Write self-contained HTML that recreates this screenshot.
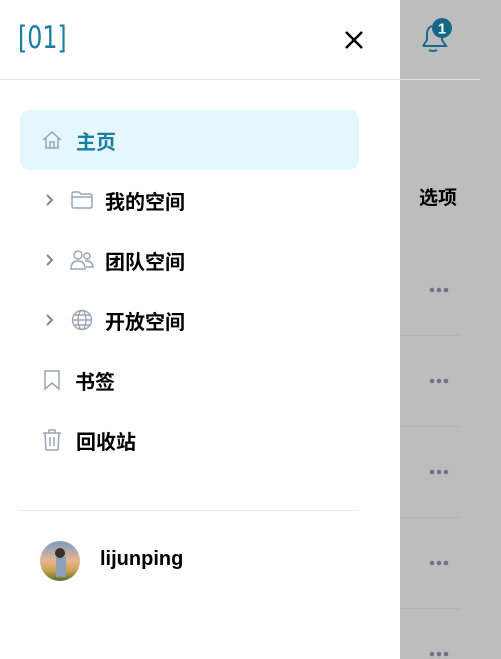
<!DOCTYPE html>
<html><head><meta charset="utf-8"><style>
*{margin:0;padding:0;box-sizing:border-box}
body{width:501px;height:659px;overflow:hidden;background:#bdbdbd;font-family:"Liberation Sans","Noto Sans CJK SC",sans-serif;position:relative}
.drawer{position:absolute;left:0;top:0;width:400px;height:659px;background:#fff}
.hline{position:absolute;left:0;top:79px;width:480px;height:1px;background:#e2e2e2}
.logo{position:absolute;left:18px;top:20px;font-size:31px;color:#1a7fa3;font-family:"Liberation Sans Narrow","DejaVu Sans Condensed","Liberation Sans",sans-serif;transform:scaleX(0.85);transform-origin:left top}
.close{position:absolute;left:344px;top:30px}
.item{position:absolute;left:20px;width:339px;height:60px;display:flex;align-items:center;font-size:20px;font-weight:bold;color:#000}
.item.active{background:#e5f6fd;border-radius:10px;color:#1a7fa3}
.item svg{flex:none}
.sep{position:absolute;left:20px;top:510px;width:339px;height:1px;background:#ececec}
.dots{position:absolute;left:429px}
.rl{position:absolute;left:400px;width:60px;height:1px;background:#b3b3b3}
</style></head><body>
<div class="drawer">
<div class="logo">[01]</div>
<svg class="close" width="20" height="20" viewBox="0 0 20 20"><path d="M2 2L18 18M18 2L2 18" stroke="#000" stroke-width="2.4"/></svg>
<div class="item active" style="top:110px"><svg style="margin-left:21px;margin-right:13px" width="22" height="22" viewBox="0 0 22 22" fill="none" stroke="#9aa4b6" stroke-width="1.5"><path d="M2 11L11 3L20 11M5 9V19H17V9M9 19V13H13V19"/></svg>主页</div>
<div class="item" style="top:170px"><svg style="margin-left:24px;margin-right:16px" width="10" height="14" viewBox="0 0 10 14"><path d="M3 2L8 7L3 12" stroke="#888" stroke-width="2" fill="none"/></svg><svg style="margin-right:11px" width="24" height="20" viewBox="0 0 24 20" fill="none" stroke="#9aa4b6" stroke-width="1.5"><path d="M2 4Q2 2 4 2H9L11 4H20Q22 4 22 6V16Q22 18 20 18H4Q2 18 2 16ZM2 7H22"/></svg>我的空间</div>
<div class="item" style="top:230px"><svg style="margin-left:24px;margin-right:16px" width="10" height="14" viewBox="0 0 10 14"><path d="M3 2L8 7L3 12" stroke="#888" stroke-width="2" fill="none"/></svg><svg style="margin-right:11px" width="24" height="22" viewBox="0 0 24 22" fill="none" stroke="#9aa4b6" stroke-width="1.4"><circle cx="8" cy="6" r="4"/><circle cx="17" cy="7" r="3"/><path d="M1 20Q1 12 8 12Q15 12 15 20ZM15 12Q22 11 23 18H16"/></svg>团队空间</div>
<div class="item" style="top:290px"><svg style="margin-left:24px;margin-right:16px" width="10" height="14" viewBox="0 0 10 14"><path d="M3 2L8 7L3 12" stroke="#888" stroke-width="2" fill="none"/></svg><svg style="margin-right:11px" width="24" height="22" viewBox="0 0 24 22" fill="none" stroke="#9aa4b6" stroke-width="1.4"><circle cx="12" cy="11" r="9.5"/><ellipse cx="12" cy="11" rx="4" ry="9.5"/><path d="M2.5 11H21.5M4 6H20M4 16H20"/></svg>开放空间</div>
<div class="item" style="top:350px"><svg style="margin-left:23px;margin-right:14px" width="18" height="22" viewBox="0 0 18 22" fill="none" stroke="#9aa4b6" stroke-width="1.5"><path d="M2 2H16V20L9 14L2 20Z"/></svg>书签</div>
<div class="item" style="top:410px"><svg style="margin-left:22px;margin-right:14px" width="20" height="24" viewBox="0 0 20 24" fill="none" stroke="#9aa4b6" stroke-width="1.5"><path d="M1 5H19M7 5V2H13V5M3 5L4 22H16L17 5M8 9V18M12 9V18"/></svg>回收站</div>
<div class="sep"></div>
<svg style="position:absolute;left:40px;top:541px" width="40" height="40" viewBox="0 0 40 40"><defs><clipPath id="c"><circle cx="20" cy="20" r="20"/></clipPath><linearGradient id="g" x1="0" y1="0" x2="0" y2="1"><stop offset="0" stop-color="#7a9bc2"/><stop offset=".5" stop-color="#e7b58f"/><stop offset=".75" stop-color="#c9a24a"/><stop offset="1" stop-color="#5a6a2c"/></linearGradient></defs><g clip-path="url(#c)"><rect width="40" height="40" fill="url(#g)"/><rect x="16" y="16" width="10" height="20" fill="#8a9fb8"/><circle cx="20" cy="12" r="5" fill="#3a2c26"/></g></svg>
<div style="position:absolute;left:100px;top:548px;font-size:20px;font-weight:bold;color:#000">lijunping</div>
</div>
<div class="hline"></div>
<svg style="position:absolute;left:418px;top:14px" width="40" height="42" viewBox="0 0 40 42" fill="none"><path d="M5 32L9 26V20Q9 14 14 12M5 32H28L24 26V23M11 36Q15 38 19 36" stroke="#1a6a8a" stroke-width="2"/><circle cx="24" cy="14" r="10" fill="#156787"/><text x="24" y="19.5" text-anchor="middle" font-size="15" font-weight="bold" fill="#fff" font-family="Liberation Sans">1</text></svg>
<div style="position:absolute;left:419px;top:183px;font-size:19px;font-weight:bold;color:#000">选项</div>
<svg class="dots" style="top:287px" width="20" height="6"><g fill="#6f7480"><circle cx="3" cy="3" r="2.3"/><circle cx="10" cy="3" r="2.3"/><circle cx="17" cy="3" r="2.3"/></g></svg>
<div class="rl" style="top:335px"></div>
<svg class="dots" style="top:378px" width="20" height="6"><g fill="#6f7480"><circle cx="3" cy="3" r="2.3"/><circle cx="10" cy="3" r="2.3"/><circle cx="17" cy="3" r="2.3"/></g></svg>
<div class="rl" style="top:426px"></div>
<svg class="dots" style="top:469px" width="20" height="6"><g fill="#6f7480"><circle cx="3" cy="3" r="2.3"/><circle cx="10" cy="3" r="2.3"/><circle cx="17" cy="3" r="2.3"/></g></svg>
<div class="rl" style="top:517px"></div>
<svg class="dots" style="top:560px" width="20" height="6"><g fill="#6f7480"><circle cx="3" cy="3" r="2.3"/><circle cx="10" cy="3" r="2.3"/><circle cx="17" cy="3" r="2.3"/></g></svg>
<div class="rl" style="top:608px"></div>
<svg class="dots" style="top:651px" width="20" height="6"><g fill="#6f7480"><circle cx="3" cy="3" r="2.3"/><circle cx="10" cy="3" r="2.3"/><circle cx="17" cy="3" r="2.3"/></g></svg>
</body></html>
